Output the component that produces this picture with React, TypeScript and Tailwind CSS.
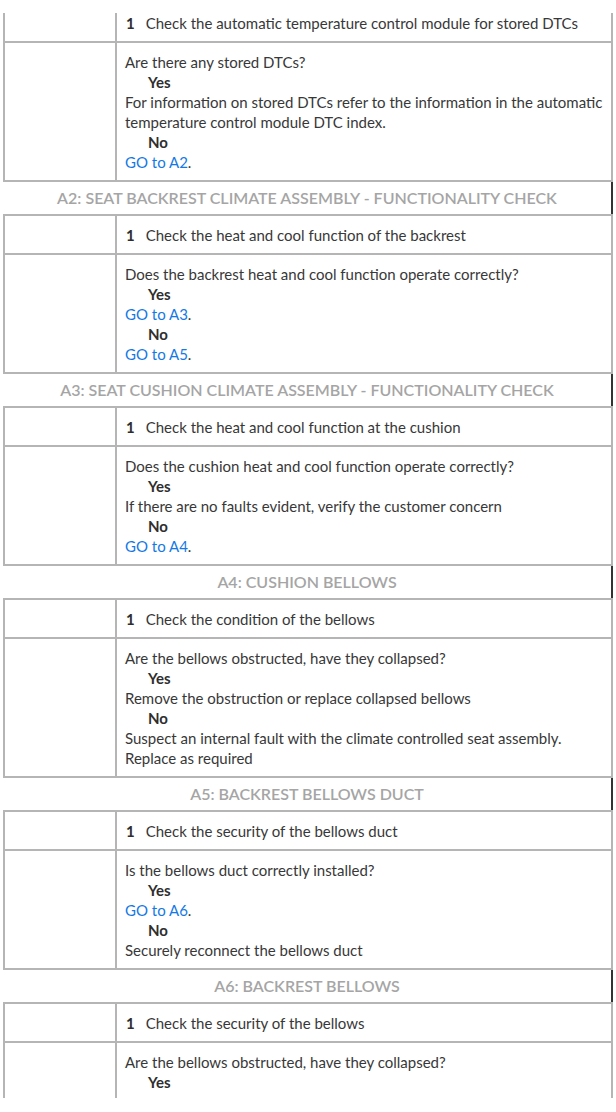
import React from "react";

type Line =
  | { kind: "text"; text: string }
  | { kind: "answer"; text: string }
  | { kind: "link"; text: string };

interface Section {
  title?: string;
  step: string;
  lines: Line[];
}

const t = (text: string): Line => ({ kind: "text", text });
const a = (text: string): Line => ({ kind: "answer", text });
const go = (text: string): Line => ({ kind: "link", text });

const sections: Section[] = [
  {
    step: "Check the automatic temperature control module for stored DTCs",
    lines: [
      t("Are there any stored DTCs?"),
      a("Yes"),
      t("For information on stored DTCs refer to the information in the automatic temperature control module DTC index."),
      a("No"),
      go("GO to A2"),
    ],
  },
  {
    title: "A2: Seat backrest climate assembly - functionality check",
    step: "Check the heat and cool function of the backrest",
    lines: [
      t("Does the backrest heat and cool function operate correctly?"),
      a("Yes"),
      go("GO to A3"),
      a("No"),
      go("GO to A5"),
    ],
  },
  {
    title: "A3: Seat cushion climate assembly - functionality check",
    step: "Check the heat and cool function at the cushion",
    lines: [
      t("Does the cushion heat and cool function operate correctly?"),
      a("Yes"),
      t("If there are no faults evident, verify the customer concern"),
      a("No"),
      go("GO to A4"),
    ],
  },
  {
    title: "A4: Cushion bellows",
    step: "Check the condition of the bellows",
    lines: [
      t("Are the bellows obstructed, have they collapsed?"),
      a("Yes"),
      t("Remove the obstruction or replace collapsed bellows"),
      a("No"),
      t("Suspect an internal fault with the climate controlled seat assembly. Replace as required"),
    ],
  },
  {
    title: "A5: Backrest bellows duct",
    step: "Check the security of the bellows duct",
    lines: [
      t("Is the bellows duct correctly installed?"),
      a("Yes"),
      go("GO to A6"),
      a("No"),
      t("Securely reconnect the bellows duct"),
    ],
  },
  {
    title: "A6: Backrest bellows",
    step: "Check the security of the bellows",
    lines: [t("Are the bellows obstructed, have they collapsed?"), a("Yes")],
  },
];

function LineItem({ line }: { line: Line }) {
  if (line.kind === "answer") {
    return <div className="pl-[23px] font-bold text-[#2e2e2e]">{line.text}</div>;
  }
  if (line.kind === "link") {
    return (
      <div>
        <span className="text-[#1479e6]">{line.text}</span>.
      </div>
    );
  }
  return <div>{line.text}</div>;
}

export default function App() {
  return (
    <div
      className="w-[616px] h-[1112px] bg-white pt-[13px] text-[15px] leading-[20px] text-[#383838]"
      style={{ fontFamily: "Lato, 'Open Sans', sans-serif" }}
    >
      {sections.map((s, i) => {
        const first = i === 0;
        const last = i === sections.length - 1;
        return (
          <div key={i} className="ml-[3px] w-[610px]">
            {s.title && (
              <div className="h-[32px] border-r-2 border-[#333] flex items-center justify-center text-[16px] font-semibold uppercase text-[#a5a5a5]">
                {s.title}
              </div>
            )}
            <div
              className={`border-x-2 border-[#b5b5b5] ${first ? "" : "border-t-2"} ${last ? "" : "border-b-2"}`}
            >
              <div className="flex border-b-2 border-[#b5b5b5]">
                <div className="w-[112px] shrink-0 border-r-2 border-[#b5b5b5]" />
                <div className={`flex-1 pl-[8px] pr-2 pb-[8px] ${first ? "pt-0" : "pt-[9px]"}`}>
                  <span className="font-bold text-[#2e2e2e] mr-[11px] ml-[1px]">1</span>
                  {s.step}
                </div>
              </div>
              <div className="flex">
                <div className="w-[112px] shrink-0 border-r-2 border-[#b5b5b5]" />
                <div className={`flex-1 pl-[8px] pr-2 pt-[9px] ${last ? "pb-[6px]" : "pb-[8px]"}`}>
                  {s.lines.map((l, j) => (
                    <LineItem key={j} line={l} />
                  ))}
                </div>
              </div>
            </div>
          </div>
        );
      })}
    </div>
  );
}
